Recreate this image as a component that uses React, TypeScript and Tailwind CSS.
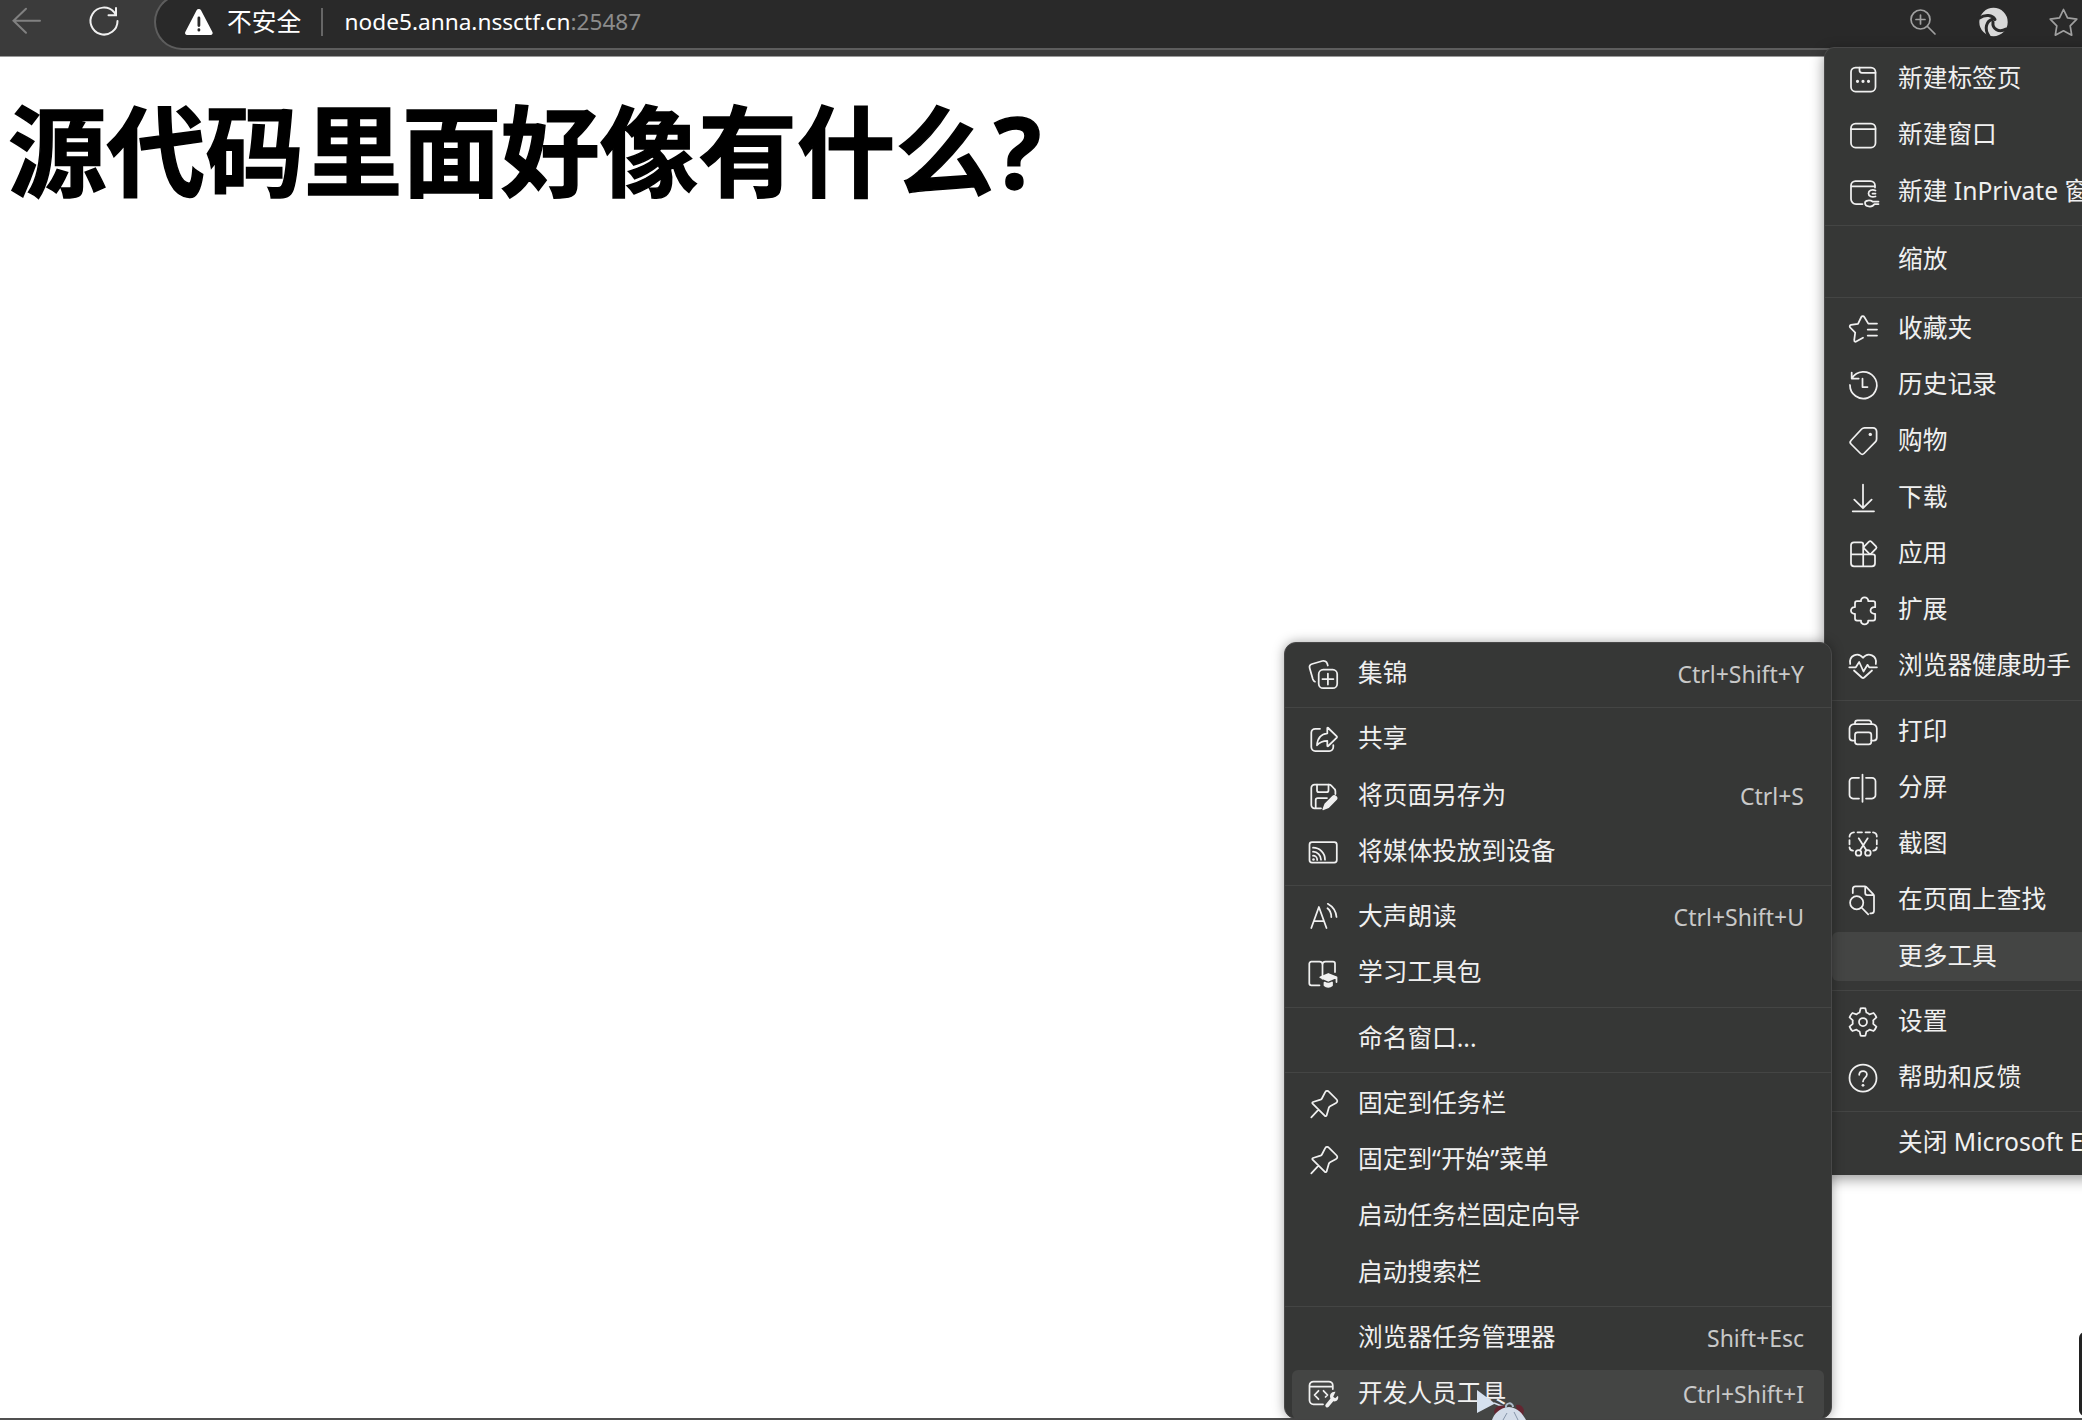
import { Fragment, type ReactNode } from 'react';

const icons: Record<string, ReactNode> = {
  newTab: (
    <>
      <rect x="2" y="2.5" width="24.5" height="24" rx="4.5" />
      <path d="M10.5 2.5v2.8a2.5 2.5 0 0 0 2.5 2.5h13.5" />
      <path d="M8.5 16.3h.01M14 16.3h.01M19.5 16.3h.01" strokeWidth="3.2" />
    </>
  ),
  window: (
    <>
      <rect x="2" y="2.5" width="24.5" height="24" rx="4.5" />
      <path d="M2 8h24.5" />
    </>
  ),
  inPrivate: (
    <>
      <path d="M13.5 26H7a5 5 0 0 1-5-5V7.5A4.5 4.5 0 0 1 6.500 3h15A4.500 4.500 0 0 1 26 7.500v2M2 8.300h24" />
      <path d="M26.500 12.500c-3.500-1.500-7 0-7 3s3.500 4 7 3M23.500 15.500h3" />
      <path d="M29.500 23.500h-6c-2-1.500-7.500-1.500-7.500 1.200 0 4.300 7 5.300 9.500 1.300h4" />
    </>
  ),
  favorites: (
    <path d="M28 8.600h-8.700L15.300 2a1.700 1.700 0 0 0-3 0L9 8.800l-7 1.100a1.500 1.500 0 0 0-.8 2.600l5 5.200-1 7.500a1.300 1.300 0 0 0 2 1.300l6.800-3.800M18.700 14.600H28M18.700 20.600H28" />
  ),
  history: (
    <>
      <path d="M2.900 7.300A13.400 13.400 0 1 1 1 14M2.700 1.500v6h7" />
      <path d="M13.500 7.700V16h5" />
    </>
  ),
  tag: (
    <>
      <path d="M15.500.8H24a3.600 3.600 0 0 1 3.600 3.600V12a4 4 0 0 1-1.200 2.900L15 26.500a2.500 2.500 0 0 1-3.500 0L2 17a2.500 2.500 0 0 1 0-3.500L12.700 2a4 4 0 0 1 2.800-1.200Z" />
      <path d="M21.300 7.400h.01" strokeWidth="3.400" />
    </>
  ),
  download: <path d="M14 .5v23.500M5.300 15.700 14 24.200l8.600-8.500M3.700 27.300H25" />,
  apps: (
    <>
      <path d="M14.200 14.300V4.300a2 2 0 0 0-2-2H5a3 3 0 0 0-3 3v18a3 3 0 0 0 3 3h18a3 3 0 0 0 3-3v-7a2 2 0 0 0-2-2H2M14.200 14.300v12" />
      <path d="M20 1.600a1.700 1.700 0 0 1 2.300 0l4.700 4.700a1.700 1.700 0 0 1 0 2.300l-4.700 4.700a1.700 1.700 0 0 1-2.300 0l-4.700-4.700a1.700 1.700 0 0 1 0-2.300Z" />
    </>
  ),
  puzzle: (
    <path d="M12 5.200c-.6-5.200 7.700-5.200 7.200 0h5a2 2 0 0 1 2 2v4c-6.200-.8-6.200 7.200 0 6.600v4.700a2 2 0 0 1-2 2h-5c.5 5.200-7.800 5.200-7.200 0H8a2 2 0 0 1-2-2v-4.700c-5.400.6-5.400-7.200 0-6.600v-4a2 2 0 0 1 2-2Z" />
  ),
  health: (
    <>
      <path d="M1.200 12C-.5 3.500 9-.5 14 5.800 19-.5 28.500 3.500 26.800 12M5 18.500l7.800 7a1.800 1.800 0 0 0 2.400 0l7.800-7" />
      <path d="M.3 15.300h6.500l3.400-5.300 4.300 9.500 4-6.700 1.700 2.500h7.700" />
    </>
  ),
  print: (
    <>
      <path d="M6 6V4.800a2.500 2.500 0 0 1 2.500-2.500h11.300a2.500 2.500 0 0 1 2.500 2.500V6" />
      <path d="M6 22.500H3.500a3 3 0 0 1-3-3V10.500a4.500 4.500 0 0 1 4.500-4.500h18.300a4.500 4.500 0 0 1 4.500 4.500v9a3 3 0 0 1-3 3h-2.500" />
      <rect x="6" y="14.300" width="16.300" height="12" rx="2.500" />
    </>
  ),
  split: (
    <path d="M13.500.5v27.300M10 3.800H4A3.500 3.500 0 0 0 .5 7.300V21A3.500 3.500 0 0 0 4 24.500h6M17 3.800h6a3.500 3.500 0 0 1 3.500 3.500V21a3.500 3.500 0 0 1-3.500 3.500h-6" />
  ),
  screenshot: (
    <>
      <path d="M5 2.300a4.400 4.400 0 0 0-4.500 4.400M.5 10v4.300M.5 17.400a3.600 3.600 0 0 0 3.500 3.300M8.500 2.300h4.500M16.500 2.300H21M24 2.300a4 4 0 0 1 3.800 4.400M27.800 10v4.300M27.800 17.400a3.600 3.600 0 0 1-3.500 3.300" />
      <path d="m9.700 8.300 7.700 12M18.700 8.300l-7.700 12" />
      <circle cx="9.500" cy="22.900" r="2.800" />
      <circle cx="18.900" cy="22.900" r="2.800" />
    </>
  ),
  find: (
    <>
      <path d="M3.800 7V3A2.700 2.700 0 0 1 6.500.3h9.300a2 2 0 0 1 1.400.6l7.200 7.400a2 2 0 0 1 .6 1.400v15a2.700 2.700 0 0 1-2.700 2.700h-1M16.200.6V7a2 2 0 0 0 2 2h6.500" />
      <circle cx="7.700" cy="16.700" r="6.600" />
      <path d="m12.500 21.500 6.700 6.800" />
    </>
  ),
  settings: (
    <>
      <path d="M11.600.4Q14-.3 16.400.4l1 4.100a10 10 0 0 1 3.100 1.800l4.100-1.300Q26.500 7 27.400 9.400l-3.200 2.900a10 10 0 0 1 0 3.500l3.200 2.800q-.9 2.500-2.800 4.400l-4.100-1.300a10 10 0 0 1-3.100 1.800l-1 4.100q-2.400.7-4.800 0l-1-4.100a10 10 0 0 1-3.100-1.800L3.400 23Q1.500 21.100.6 18.600l3.200-2.800a10 10 0 0 1 0-3.500L.6 9.400Q1.500 7 3.400 5l4.100 1.300a10 10 0 0 1 3.100-1.800Z" />
      <circle cx="14" cy="14" r="4" />
    </>
  ),
  help: (
    <>
      <circle cx="14" cy="14" r="13.500" />
      <path d="M10.200 10.800c0-5 7.700-5 7.700-.3 0 3.200-3.900 3.400-3.900 6.900" />
      <path d="M14 21.300h.01" strokeWidth="2.800" />
    </>
  ),
  collections: (
    <>
      <rect x="9.700" y="9.700" width="18.500" height="18.500" rx="4.500" />
      <path d="M18.900 13.500v11M13.400 19h11" />
      <path d="M6 21.700c-1-.4-1.700-1.400-2.200-2.600L.7 8.300A3.500 3.500 0 0 1 3 4l10.300-3a4 4 0 0 1 4.900 2.500l.6 2" />
    </>
  ),
  share: (
    <>
      <path d="M11 3.800H6.300a4 4 0 0 0-4 4V22a4 4 0 0 0 4 4h14a4 4 0 0 0 4-4v-2" />
      <path d="M18.300 3.500v5C11.500 9 8.500 13 8 20.300c3-3.500 6-4.500 10.300-4.500v4.800a.5.500 0 0 0 .9.400l8.600-8.400a.9.900 0 0 0 0-1.200L19.200 3a.5.500 0 0 0-.9.500Z" />
    </>
  ),
  saveAs: (
    <>
      <path d="M12 26.300H5.500a3.200 3.200 0 0 1-3.200-3.200V5.900a3.200 3.200 0 0 1 3.200-3.200h14.600a3 3 0 0 1 2.200.9L25.500 7a3 3 0 0 1 .9 2.200V12" />
      <path d="M8 2.700v5.500a2 2 0 0 0 2 2h7.500a2 2 0 0 0 2-2V2.700M6.700 26V18a2 2 0 0 1 2-2H18" />
      <path d="m14.300 27.300 2-5.300 7.500-7.500c1.800-1.800 5 1 3.200 3l-7.600 7.600Z" fill="currentColor" />
    </>
  ),
  cast: (
    <>
      <rect x=".5" y="4.200" width="27.300" height="20.300" rx="2.500" />
      <path d="M4 17.700a4.200 4.200 0 0 1 4.200 4.200M4 13.700a8 8 0 0 1 8 8M4 9.700a12 12 0 0 1 12 12" />
      <path d="M4.500 21.500h.01" strokeWidth="2.600" />
    </>
  ),
  readAloud: <path d="M2.300 25 9.900 4l7.600 21M5 18h10M18.500 5.300c2.500 2 3.800 5 3.800 8.700M18.800.8c5.300 3 8.200 7.500 8.700 13.200" />,
  learning: (
    <>
      <path d="M10.500 26.300H2.300a2 2 0 0 1-2-2V4.700a2 2 0 0 1 2-2h8.200a3 3 0 0 1 3 3v14M13.500 5.700a3 3 0 0 1 3-3H24a2 2 0 0 1 2 2V13" />
      <path d="m11.300 18.300 8-3.300 8.300 3.300-8.300 3.500ZM27.500 18.500V23M15.500 23.500c2 1.300 5.500 1.300 7.500 0v2.800c-2 2-5.500 2-7.500 0Z" fill="currentColor" />
    </>
  ),
  pin: (
    <path d="m19.800 1.600 7.900 7.900a2.200 2.200 0 0 1-.6 3.500l-6 3.200a2.500 2.500 0 0 0-1.200 1.400l-2.300 7.800a1 1 0 0 1-1.700.4L3.600 13.700A1 1 0 0 1 4 12l7.500-2.300a2.500 2.500 0 0 0 1.400-1.200l3.300-6.300a2.200 2.200 0 0 1 3.600-.6ZM9.500 19.700l-7.200 7.600" />
  ),
  devTools: (
    <>
      <path d="M14 24.300H4.500a4 4 0 0 1-4-4V5.500a4 4 0 0 1 4-4h15.300a4 4 0 0 1 4 4V9M.5 6.500h23.300M9.500 10.800l-4 4.200 4 4.200M14.500 10.800l4 4.200-2 2" />
      <path d="M26.500 11.800c-4.300-.3-6.500 3.200-5 6.700l-4.700 5.700a1.900 1.900 0 0 0 2.900 2.600l4.600-5.500c3.500.6 5.700-2 4.700-5.600l-2.800 2.600-2-1.600Z" fill="currentColor" stroke="none" />
    </>
  ),
};

interface MenuEntry {
  label: string;
  icon?: string;
  shortcut?: string;
  active?: boolean;
  tall?: boolean;
}

const mainMenu: MenuEntry[][] = [
  [
    { label: '新建标签页', icon: 'newTab' },
    { label: '新建窗口', icon: 'window' },
    { label: '新建 InPrivate 窗口', icon: 'inPrivate' },
  ],
  [{ label: '缩放', tall: true }],
  [
    { label: '收藏夹', icon: 'favorites' },
    { label: '历史记录', icon: 'history' },
    { label: '购物', icon: 'tag' },
    { label: '下载', icon: 'download' },
    { label: '应用', icon: 'apps' },
    { label: '扩展', icon: 'puzzle' },
    { label: '浏览器健康助手', icon: 'health' },
  ],
  [
    { label: '打印', icon: 'print' },
    { label: '分屏', icon: 'split' },
    { label: '截图', icon: 'screenshot' },
    { label: '在页面上查找', icon: 'find' },
    { label: '更多工具', active: true },
  ],
  [
    { label: '设置', icon: 'settings' },
    { label: '帮助和反馈', icon: 'help' },
  ],
  [{ label: '关闭 Microsoft Edge' }],
];

const toolsMenu: MenuEntry[][] = [
  [{ label: '集锦', icon: 'collections', shortcut: 'Ctrl+Shift+Y' }],
  [
    { label: '共享', icon: 'share' },
    { label: '将页面另存为', icon: 'saveAs', shortcut: 'Ctrl+S' },
    { label: '将媒体投放到设备', icon: 'cast' },
  ],
  [
    { label: '大声朗读', icon: 'readAloud', shortcut: 'Ctrl+Shift+U' },
    { label: '学习工具包', icon: 'learning' },
  ],
  [{ label: '命名窗口...' }],
  [
    { label: '固定到任务栏', icon: 'pin' },
    { label: '固定到“开始”菜单', icon: 'pin' },
    { label: '启动任务栏固定向导' },
    { label: '启动搜索栏' },
  ],
  [
    { label: '浏览器任务管理器', shortcut: 'Shift+Esc' },
    { label: '开发人员工具', icon: 'devTools', shortcut: 'Ctrl+Shift+I', active: true },
  ],
];

function Icon({ name }: { name?: string }) {
  return (
    <svg
      viewBox="0 0 28 28"
      className="size-7 shrink-0 overflow-visible"
      fill="none"
      stroke="currentColor"
      strokeWidth="1.75"
      strokeLinecap="round"
      strokeLinejoin="round"
    >
      {name && icons[name]}
    </svg>
  );
}

function Menu({ groups }: { groups: MenuEntry[][] }) {
  return (
    <>
      {groups.map((group, i) => (
        <Fragment key={i}>
          {i > 0 && <div className="mt-[5px] mb-[3px] h-px bg-[#444544]" />}
          {group.map((entry) => (
            <div key={entry.label} className={`flex items-center px-[7px] ${entry.tall ? 'h-[63px]' : 'h-[56.25px]'}`}>
              <div
                className={`flex h-[49px] w-full items-center rounded-md pr-5 pl-[17px] text-[#f0f0f0] ${
                  entry.active ? 'bg-[#444544]' : ''
                }`}
              >
                <Icon name={entry.icon} />
                <span className="ml-[21px] pb-[2px] text-[24.7px] leading-8 whitespace-nowrap">{entry.label}</span>
                {entry.shortcut && (
                  <span className="ml-auto text-[23px] leading-8 text-[#c9c9c9]">{entry.shortcut}</span>
                )}
              </div>
            </div>
          ))}
        </Fragment>
      ))}
    </>
  );
}

function AddressBar() {
  return (
    <header className="flex h-[57px] overflow-hidden border-b border-[#999] bg-[#3b3b3b]">
      <svg viewBox="0 0 154 56" className="h-14 w-[154px] shrink-0" fill="none" strokeWidth="2" strokeLinecap="round">
        <path d="M40 20.700H13.500M26 8.700l-12.500 12 12.500 12" stroke="#818181" />
        <path d="M117.500 21a13.500 13.500 0 1 1-3.500-9l2 3M116 8v7.200h-7.500" stroke="#f0f0f0" />
      </svg>
      <div className="-mt-[6px] flex h-[56px] flex-1 items-center rounded-l-[28px] border-2 border-r-0 border-[#5d5d5d] bg-[#292929] pl-7">
        <svg viewBox="0 0 30 28" className="h-7 w-[30px]">
          <path
            d="M12.600 2.200 1.300 24a2 2 0 0 0 1.800 3h23.500a2 2 0 0 0 1.800-3L17 2.200a2.500 2.500 0 0 0-4.400 0Z"
            fill="#fff"
          />
          <path d="M14.900 10v7.500M14.900 21.600v.6" stroke="#292929" strokeWidth="2.800" strokeLinecap="round" />
        </svg>
        <span className="ml-[13px] text-[24.7px] leading-8 text-white">不安全</span>
        <span className="ml-5 h-7 w-[1.5px] bg-[#666]" />
        <span className="ml-[22px] pb-px text-[22.65px] leading-8 text-white">
          node5.anna.nssctf.cn<span className="text-[#8c8c8c]">:25487</span>
        </span>
        <svg
          viewBox="0 0 172 42"
          className="ml-auto h-[42px] w-[172px]"
          fill="none"
          stroke="#a0a0a0"
          strokeWidth="1.7"
          strokeLinecap="round"
          strokeLinejoin="round"
        >
          <circle cx="10.500" cy="18.500" r="9.500" />
          <path d="M10.500 14v9M6 18.500h9M17.500 25.500l7.500 7.500" />
          <circle cx="83.500" cy="21" r="14.200" fill="#d8d8d8" stroke="none" />
          <path
            d="M69.500 17c6-4 13-3 15.500 1.500M79 35c-5-7-3-15 4-17M96 28c-7 4-14 0-13-7"
            stroke="#292929"
            strokeWidth="3"
          />
          <path d="m153.500 8.500 4 8.300 9.300 1.400-6.600 6.600 1.500 9.400-8.200-4.400-8.200 4.400 1.500-9.400-6.600-6.600 9.300-1.400Z" />
        </svg>
      </div>
    </header>
  );
}

export default function App() {
  return (
    <div className="relative flex h-[1420px] w-[2082px] flex-col overflow-hidden bg-white font-['Noto_Sans','Noto_Sans_CJK_SC',sans-serif]">
      <AddressBar />
      <main className="flex-1 border-b-2 border-[#505050] pt-[34px] pl-[8px]">
        <h1 className="text-[98.6px] leading-[120px] font-bold text-black [-webkit-text-stroke:1.5px_black]">
          源代码里面好像有什么?
        </h1>
      </main>

      <div className="absolute top-[47px] left-[1824px] h-[1128px] w-[290px] rounded-tl-[10px] border-t border-l border-[#484848] bg-[#363736] pt-[3px] shadow-[0_4px_14px_rgba(0,0,0,0.4)]">
        <Menu groups={mainMenu} />
      </div>

      <div className="absolute top-[642px] left-[1284px] h-[777px] w-[548px] rounded-[12px] border border-[#484848] bg-[#363736] pt-[3px] shadow-[0_0_12px_rgba(0,0,0,0.35)]">
        <Menu groups={toolsMenu} />
      </div>

      <div className="absolute top-[1332px] left-[2079px] h-[84px] w-5 rounded-md bg-[#222]" />

      {/* pointer with the little mascot hanging below it */}
      <svg viewBox="0 0 56 32" className="absolute top-[1388px] left-[1474px] h-8 w-14">
        <path d="M3 2v23l18-9.500Z" fill="#d5e0ee" />
        <path d="m20 15 10 4" stroke="#d5e0ee" strokeWidth="1.500" />
        <path d="M20 23q3-7 11-5l-3 9h-7ZM42 17q6-1 8 5l-1 6-6-3Z" fill="#642631" />
        <path d="M18 32c2-6 7-12 17-13 9 1 13 6 17 13Z" fill="#d3dce9" />
        <path d="M32 20c-1-6 7-6 7-1" fill="none" stroke="#aebccb" strokeWidth="2" />
        <path d="m29 32 4-7M44 32l-4-8" stroke="#8594a8" strokeWidth="1" />
      </svg>
    </div>
  );
}
